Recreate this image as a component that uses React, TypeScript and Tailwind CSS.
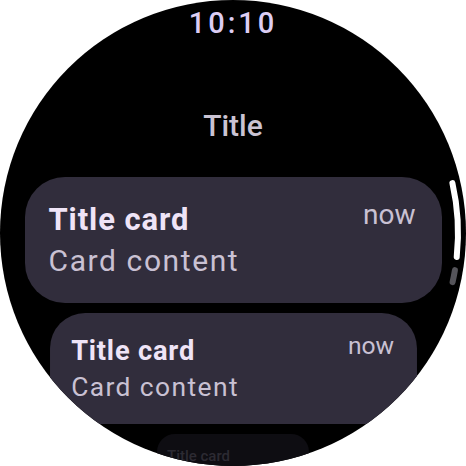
const font = { fontFamily: "Roboto, 'Noto Sans', sans-serif" };

function polar(r: number, deg: number) {
  const a = (deg * Math.PI) / 180;
  return [233 + r * Math.cos(a), 233 + r * Math.sin(a)];
}

function arc(r: number, from: number, to: number) {
  const [x1, y1] = polar(r, from);
  const [x2, y2] = polar(r, to);
  return `M ${x1} ${y1} A ${r} ${r} 0 0 1 ${x2} ${y2}`;
}

function Card() {
  return (
    <div className="w-[417px] h-[126px] shrink-0 rounded-[40px] bg-[#312d3c] pl-[24px] pr-[26px] pt-[25px]">
      <div className="flex items-start justify-between">
        <span className="text-[31px] leading-[36px] font-bold tracking-[0.9px] text-[#efe4f7]">
          Title card
        </span>
        <span className="text-[28px] leading-[26px] text-[#c9c1d3]">now</span>
      </div>
      <div className="mt-[5px] text-[30px] leading-[36px] tracking-[1.6px] text-[#c9c1d3]">
        Card content
      </div>
    </div>
  );
}

export default function App() {
  return (
    <div className="w-[466px] h-[466px] bg-white" style={font}>
      <div className="relative w-[466px] h-[466px] rounded-full bg-black overflow-hidden flex flex-col items-center">
        <div className="mt-[6px] text-[29px] leading-[34px] tracking-[3px] font-medium text-[#dccdf3]">
          10:10
        </div>
        <div className="mt-[68px] text-[30px] leading-[36px] font-medium text-[#cac3d3]">
          Title
        </div>
        <div className="mt-[33px]">
          <Card />
        </div>
        <div className="mt-[10px] -mb-[15px] scale-[0.88] origin-top">
          <Card />
        </div>
        <div className="mt-[10px] w-[152px] h-[60px] shrink-0 rounded-[18px] bg-[#0e0d12] pl-[10px] pt-[10px]">
          <span className="text-[15px] leading-[18px] font-medium text-[#2c2a32]">Title card</span>
        </div>
        <svg className="absolute inset-0" width="466" height="466" viewBox="0 0 466 466">
          <path d={arc(225, -12.8, 6.1)} stroke="#ffffff" strokeWidth="6" strokeLinecap="round" fill="none" />
          <path d={arc(225, 9.5, 12.6)} stroke="#55545a" strokeWidth="6" strokeLinecap="round" fill="none" />
        </svg>
      </div>
    </div>
  );
}
